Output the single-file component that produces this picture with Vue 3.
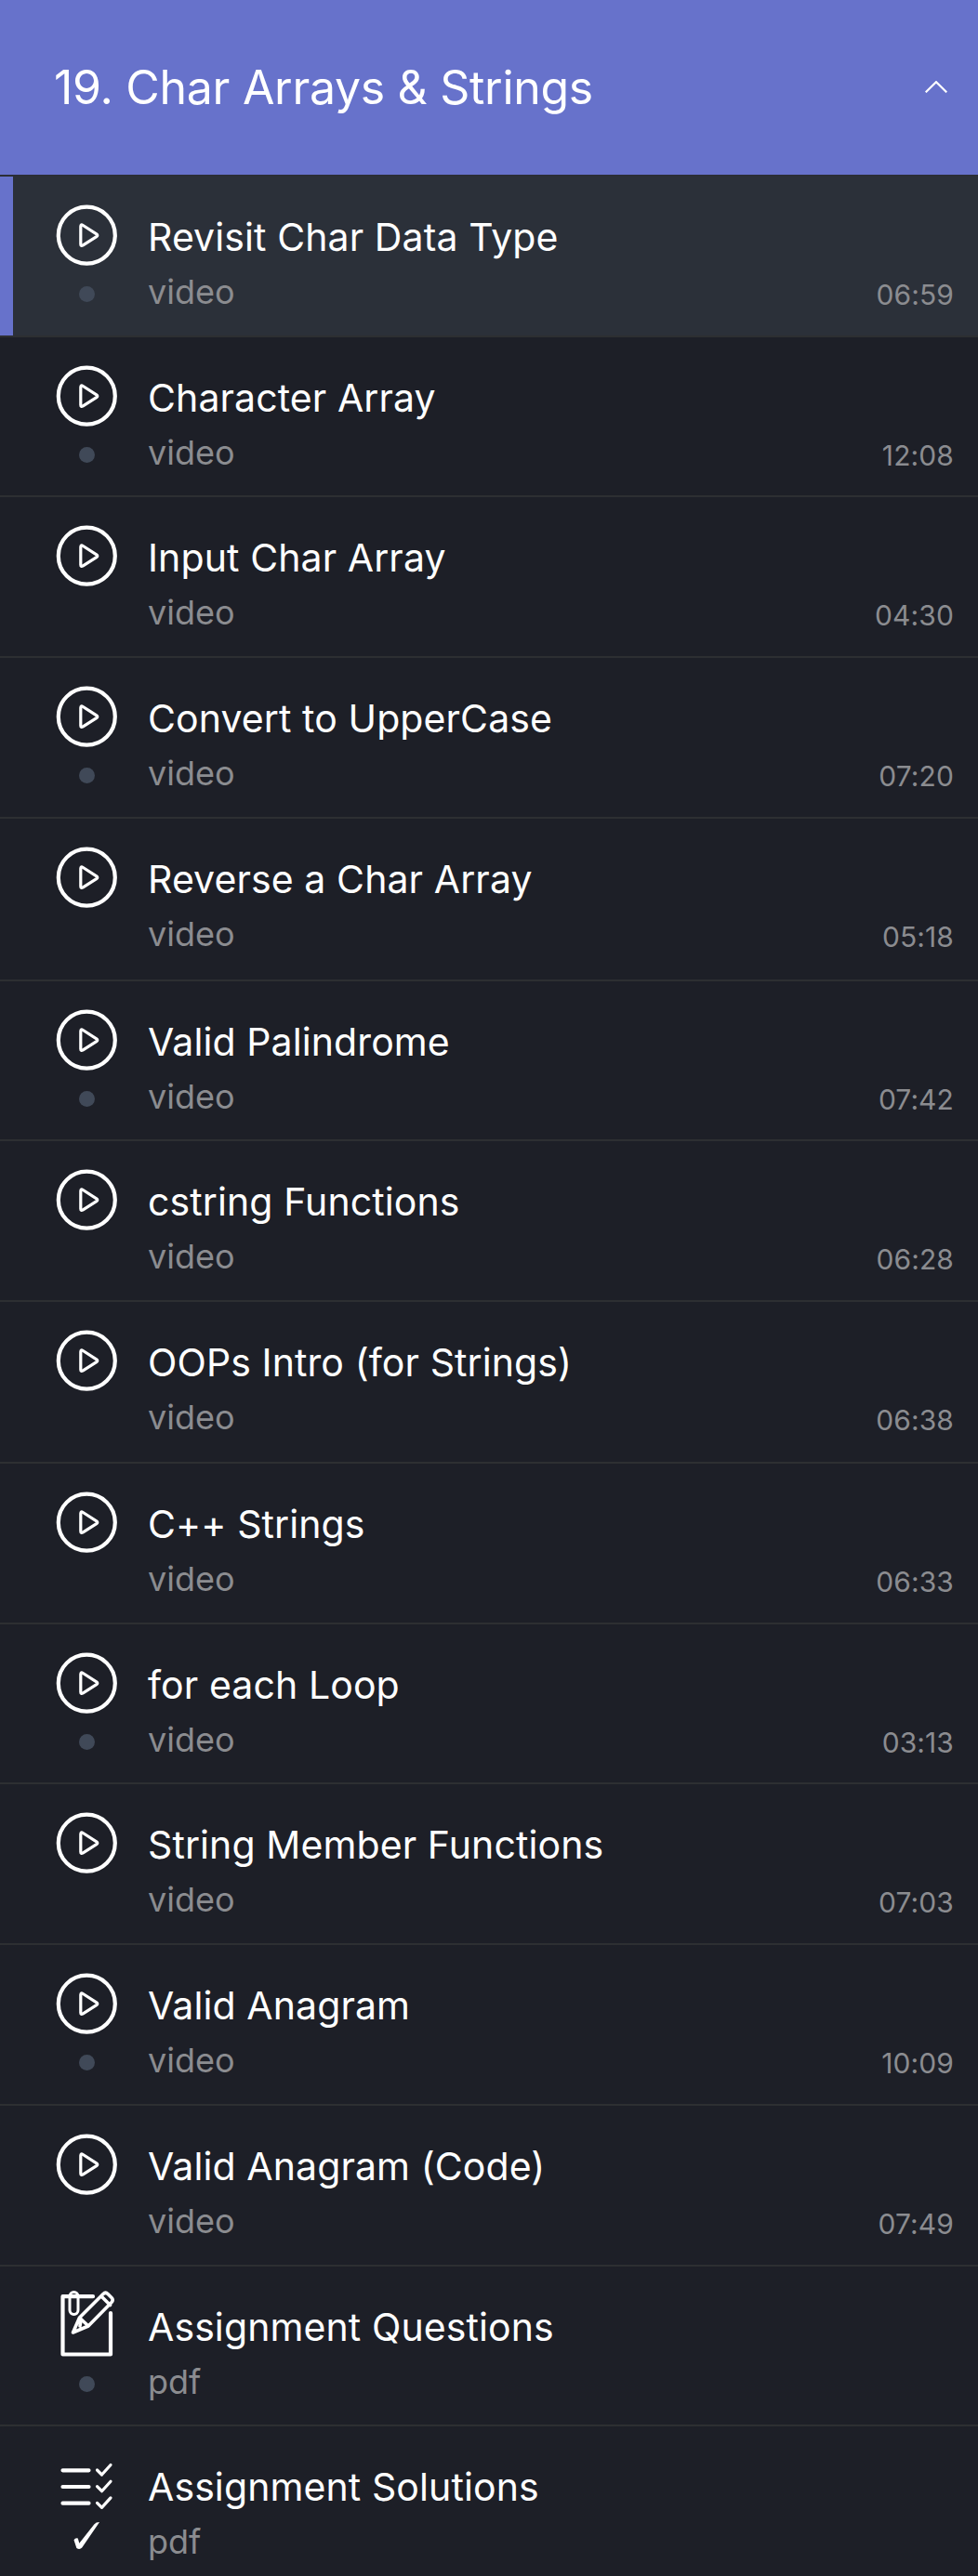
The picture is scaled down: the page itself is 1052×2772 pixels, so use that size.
<script setup>
const lessons = [
  { title: 'Revisit Char Data Type', kind: 'video', time: '06:59', dot: true, active: true },
  { title: 'Character Array', kind: 'video', time: '12:08', dot: true, size: 'short' },
  { title: 'Input Char Array', kind: 'video', time: '04:30' },
  { title: 'Convert to UpperCase', kind: 'video', time: '07:20', dot: true },
  { title: 'Reverse a Char Array', kind: 'video', time: '05:18', size: 'tallest' },
  { title: 'Valid Palindrome', kind: 'video', time: '07:42', dot: true, size: 'short' },
  { title: 'cstring Functions', kind: 'video', time: '06:28' },
  { title: 'OOPs Intro (for Strings)', kind: 'video', time: '06:38', size: 'tall' },
  { title: 'C++ Strings', kind: 'video', time: '06:33' },
  { title: 'for each Loop', kind: 'video', time: '03:13', dot: true, size: 'short' },
  { title: 'String Member Functions', kind: 'video', time: '07:03' },
  { title: 'Valid Anagram', kind: 'video', time: '10:09', dot: true },
  { title: 'Valid Anagram (Code)', kind: 'video', time: '07:49' },
  { title: 'Assignment Questions', kind: 'pdf', icon: 'note', dot: true, size: 'short' },
  { title: 'Assignment Solutions', kind: 'pdf', icon: 'list', done: true },
]
</script>

<template>
  <main class="panel">
    <header class="head">
      <h1>19. Char Arrays &amp; Strings</h1>
      <svg class="chevron" viewBox="0 0 24 13"><path d="M.7 12.3 12 1.2l11.3 11.1" /></svg>
    </header>
    <ul class="list">
      <li v-for="l in lessons" :key="l.title" class="row" :class="[l.size, { active: l.active }]">
        <div class="status">
          <svg v-if="l.icon === 'note'" class="icon" viewBox="0 0 66 76">
            <path d="M40 7.200H7.500V69.500H59V25" stroke-width="4.200" />
            <rect x="15" y="2.500" width="9" height="24" rx="4.500" stroke-width="3" />
            <path d="m18.500 46 7-16L51 4.500q2.500-2.500 5 0l4 4q2.500 2.500 0 5L35 39ZM25.500 30l9.500 9M27 33l-1 6M49 7l9.500 9.500" stroke-width="3.600" />
          </svg>
          <svg v-else-if="l.icon === 'list'" class="icon" viewBox="0 0 66 76">
            <path d="M7.500 22.300h28M7.500 40h28M7.500 57.700h28" stroke-width="4.200" />
            <path d="m44.500 22 5 5L59 16.500M44.500 39.700l5 5L59 34.200M44.500 57.400l5 5L59 51.900" stroke-width="3.200" />
          </svg>
          <svg v-else class="icon" viewBox="0 0 66 76">
            <circle cx="33.300" cy="38.200" r="30.500" stroke-width="4.200" />
            <path d="M26.800 28.700q0-2.700 2.500-1.200L43.800 36.800q2 1.400 0 2.800L29.300 48.900Q26.800 50.400 26.800 47.700Z" stroke-width="3.200" />
          </svg>
          <i v-if="l.dot" class="dot"></i>
          <svg v-if="l.done" class="done" viewBox="0 0 30 31"><path d="M29 0 9.500 28.500Q7 31 3.500 29L.5 20Q2 17 5 18L6.500 23.500 23 2.500Q25 0 29 0Z" /></svg>
        </div>
        <div class="body">
          <h2>{{ l.title }}</h2>
          <p><span>{{ l.kind }}</span><time v-if="l.time">{{ l.time }}</time></p>
        </div>
      </li>
    </ul>
  </main>
</template>

<style>
body { background: #1d1f27; }
</style>

<style scoped>
.panel { height: 2772px; overflow: hidden; background: #1d1f27; color: #fff; font-family: Inter, sans-serif; }
.head { box-sizing: border-box; height: 188px; padding: 0 33px 0 58px; display: flex; align-items: center; justify-content: space-between; background: #6772cb; }
h1, h2, p, ul { margin: 0; padding: 0; font-weight: 400; }
h1 { font-size: 50px; line-height: 60px; letter-spacing: -.3px; }
svg { display: block; flex: none; fill: none; stroke: #fff; stroke-linecap: round; stroke-linejoin: round; }
.chevron { width: 24px; height: 13px; stroke-width: 2.200; stroke-linecap: butt; stroke-linejoin: miter; margin-bottom: 2px; }
.list { list-style: none; }
.row { box-sizing: border-box; height: 173px; border-top: 2px solid #2d2f32; display: flex; }
.row.short { height: 172px; }
.row.tall { height: 174px; }
.row.tallest { height: 175px; }
.active { border-top-color: #2b2e37; background: #2b3039; box-shadow: inset 14px 0 #6772cb; }
.status { width: 66px; margin-left: 60px; padding-top: 25px; display: flex; flex-direction: column; align-items: center; }
.icon { width: 66px; height: 76px; }
.dot { width: 17px; height: 17px; margin: 17px 0 0 1px; border-radius: 50%; background: #404958; }
.done { width: 29px; height: 30px; margin: 2px 0 0 1px; fill: #fff; stroke: none; }
.body { flex: 1; margin-left: 33px; padding: 40px 26px 0 0; }
h2 { font-size: 41px; line-height: 50px; letter-spacing: .1px; white-space: nowrap; }
p { margin-top: 12px; display: flex; justify-content: space-between; align-items: flex-start; font-size: 36px; line-height: 44px; color: #8b8c90; }
time { font-size: 30px; line-height: 50px; letter-spacing: .1px; }
</style>
